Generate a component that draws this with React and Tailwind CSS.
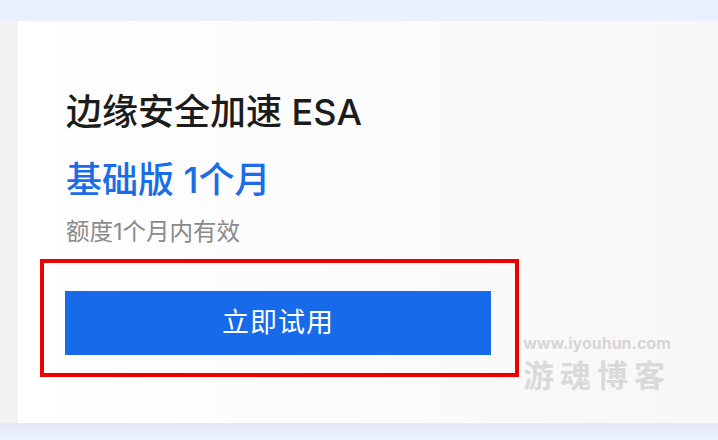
import React from 'react';

const cjk = { fontFamily: 'Inter, "Noto Sans CJK SC", sans-serif' };

export default function App() {
  return (
    <div className="w-[718px] h-[440px] flex flex-col bg-[#e8f0fd] overflow-hidden" style={cjk}>
      <div className="h-[21px] shrink-0 bg-[#e9f1fe]" />
      <div className="h-[402px] shrink-0 flex">
        <div className="w-[18px] bg-[#f2f2f2]" />
        <div className="relative flex-1 bg-gradient-to-r from-[#ffffff] via-[#fbfbfb] to-[#f7f7f7] pl-[48px] pt-[71px]">
          <h1 className="text-[36px] leading-[40px] font-medium text-[#1c1c1c]">边缘安全加速 ESA</h1>
          <div className="mt-[28px] text-[36px] leading-[40px] font-medium text-[#1a6de6]">基础版 1个月</div>
          <p className="mt-[18px] text-[23.5px] leading-[28px] text-[#8a8a8a]">额度1个月内有效</p>
          <div className="mt-[13px] -ml-[26px] w-[479px] h-[118px] border-4 border-[#ee0000] pl-[21px] pt-[28px]">
            <button className="w-[426px] h-[64px] bg-[#176bea] text-white text-[27px] tracking-[1px] flex items-center justify-center">
              立即试用
            </button>
          </div>
          <div className="absolute left-[505px] top-[314px] flex flex-col items-center text-[#d6d6d6] select-none">
            <span className="text-[16px] leading-[16px] font-bold">www.iyouhun.com</span>
            <span className="mt-[8px] text-[31px] leading-[34px] font-bold tracking-[6px] text-[#dadada]">游魂博客</span>
          </div>
        </div>
      </div>
      <div className="flex-1 bg-gradient-to-b from-[#e4eaf6] to-[#e9f2fe]" />
    </div>
  );
}
